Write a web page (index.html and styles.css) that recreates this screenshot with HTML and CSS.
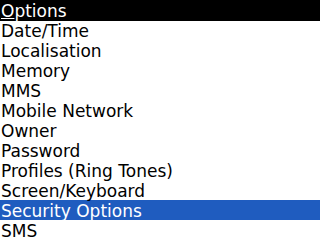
FILE: index.html
```html
<!DOCTYPE html>
<html>
<head>
<meta charset="utf-8">
<link rel="stylesheet" href="styles.css">
</head>
<body>
<div class="screen">
  <div class="title"><span class="accel">O</span>ptions</div>
  <ul class="list">
    <li class="item">Date/Time</li>
    <li class="item">Localisation</li>
    <li class="item">Memory</li>
    <li class="item">MMS</li>
    <li class="item">Mobile Network</li>
    <li class="item">Owner</li>
    <li class="item">Password</li>
    <li class="item">Profiles (Ring Tones)</li>
    <li class="item">Screen/Keyboard</li>
    <li class="item selected">Security Options</li>
    <li class="item">SMS</li>
  </ul>
</div>
</body>
</html>
```

FILE: styles.css
```css
html, body {
  margin: 0;
  padding: 0;
  background: #ffffff;
}
.screen {
  width: 320px;
  height: 240px;
  overflow: hidden;
  font-family: "DejaVu Sans", sans-serif;
  font-size: 17px;
  color: #000000;
}
.title {
  box-sizing: border-box;
  height: 21px;
  line-height: 20px;
  padding-top: 1px;
  background: #000000;
  color: #ffffff;
  padding-left: 1px;
  margin-bottom: -1px;
}
.accel {
  text-decoration: underline;
}
.list {
  list-style: none;
  margin: 0;
  padding: 0;
}
.item {
  box-sizing: border-box;
  height: 20px;
  line-height: 20px;
  padding-top: 1px;
  padding-left: 1px;
  white-space: nowrap;
}
.selected {
  background: #1f5cbf;
  color: #ffffff;
}
```
